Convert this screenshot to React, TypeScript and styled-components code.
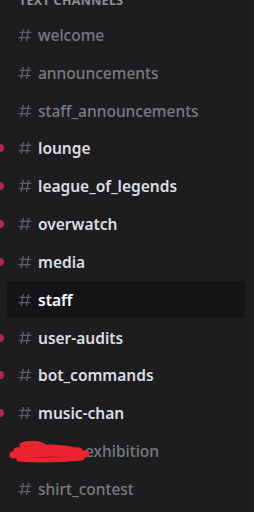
import React from "react";
import styled, { createGlobalStyle } from "styled-components";

const GlobalStyle = createGlobalStyle`
  html, body {
    margin: 0;
    padding: 0;
    background: #1d1d20;
    overflow: hidden;
  }
  * { box-sizing: border-box; }
`;

const Sidebar = styled.nav`
  width: 254px;
  height: 512px;
  background: #1d1d20;
  font-family: "Noto Sans", "Open Sans", sans-serif;
  overflow: hidden;
  display: flex;
  flex-direction: column;
`;

const Header = styled.div`
  margin-top: -7px;
  height: 16px;
  padding-left: 19px;
  margin-bottom: 7px;
  font-size: 12.5px;
  line-height: 16px;
  font-weight: 700;
  letter-spacing: 0.3px;
  text-transform: uppercase;
  color: #8e9096;
`;

const List = styled.ul`
  list-style: none;
  margin: 0;
  padding: 0;
  display: flex;
  flex-direction: column;
`;

const Item = styled.li`
  position: relative;
  height: 37.83px;
  padding: 0.5px 9px 0.5px 7px;
`;

const Pill = styled.span`
  position: absolute;
  left: -4px;
  top: 50%;
  width: 8px;
  height: 8px;
  margin-top: -4px;
  border-radius: 0 4px 4px 0;
  background: #b42650;
`;

type Tone = "muted" | "unread" | "selected";

const Row = styled.div<{ $tone: Tone }>`
  position: relative;
  height: 100%;
  display: flex;
  align-items: center;
  gap: 5px;
  padding-left: 10px;
  border-radius: 4px;
  background: ${(p) => (p.$tone === "selected" ? "#141416" : "transparent")};
`;

const HashIcon = styled.svg`
  flex: none;
  width: 16px;
  height: 16px;
  color: #5d5f64;
`;

const Name = styled.span<{ $tone: Tone }>`
  font-size: 15.5px;
  line-height: 20px;
  white-space: nowrap;
  font-weight: ${(p) => (p.$tone === "muted" ? 500 : 600)};
  color: ${(p) =>
    p.$tone === "selected" ? "#ffffff" : p.$tone === "unread" ? "#dcdde0" : "#797b80"};
`;

const Hidden = styled.span`
  display: inline-block;
  width: 47px;
`;

const Scribble = styled.svg`
  position: absolute;
  left: 2px;
  top: 8px;
  width: 80px;
  height: 22px;
  pointer-events: none;
`;

const Hash = () => (
  <HashIcon viewBox="0 0 24 24" aria-hidden>
    <path
      fill="currentColor"
      fillRule="evenodd"
      d="M5.88657 21C5.57547 21 5.3399 20.7189 5.39427 20.4126L6.00001 17H2.59511C2.28449 17 2.04905 16.7198 2.10259 16.4138L2.27759 15.4138C2.31946 15.1746 2.52722 15 2.77011 15H6.35001L7.41001 9H4.00511C3.69449 9 3.45905 8.71977 3.51259 8.41381L3.68759 7.41381C3.72946 7.17456 3.93722 7 4.18011 7H7.76001L8.39677 3.41262C8.43914 3.17391 8.64664 3 8.88907 3H9.87344C10.1845 3 10.4201 3.28107 10.3657 3.58738L9.76001 7H15.76L16.3968 3.41262C16.4391 3.17391 16.6466 3 16.8891 3H17.8734C18.1845 3 18.4201 3.28107 18.3657 3.58738L17.76 7H21.1649C21.4755 7 21.711 7.28023 21.6574 7.58619L21.4824 8.58619C21.4406 8.82544 21.2328 9 20.9899 9H17.41L16.35 15H19.7549C20.0655 15 20.301 15.2802 20.2474 15.5862L20.0724 16.5862C20.0306 16.8254 19.8228 17 19.5799 17H16L15.3632 20.5874C15.3209 20.8261 15.1134 21 14.8709 21H13.8866C13.5755 21 13.3399 20.7189 13.3943 20.4126L14 17H8.00001L7.36325 20.5874C7.32088 20.8261 7.11337 21 6.87094 21H5.88657ZM9.41045 9L8.35045 15H14.3504L15.4104 9H9.41045Z"
    />
  </HashIcon>
);

const channels: { name: string; tone: Tone; pill?: boolean; redacted?: boolean }[] = [
  { name: "welcome", tone: "muted" },
  { name: "announcements", tone: "muted" },
  { name: "staff_announcements", tone: "muted" },
  { name: "lounge", tone: "unread", pill: true },
  { name: "league_of_legends", tone: "unread", pill: true },
  { name: "overwatch", tone: "unread", pill: true },
  { name: "media", tone: "unread", pill: true },
  { name: "staff", tone: "selected" },
  { name: "user-audits", tone: "unread", pill: true },
  { name: "bot_commands", tone: "unread", pill: true },
  { name: "music-chan", tone: "unread", pill: true },
  { name: "exhibition", tone: "muted", redacted: true },
  { name: "shirt_contest", tone: "muted" },
];

export default function App() {
  return (
    <>
      <GlobalStyle />
      <Sidebar>
        <Header>Text Channels</Header>
        <List>
          {channels.map((c) => (
            <Item key={c.name}>
              {c.pill && <Pill />}
              <Row $tone={c.tone}>
                <Hash />
                <Name $tone={c.tone}>
                  {c.redacted && <Hidden />}
                  {c.name}
                </Name>
                {c.redacted && (
                  <Scribble viewBox="0 0 80 22" aria-hidden>
                    <g
                      fill="none"
                      stroke="#ea2530"
                      strokeLinecap="round"
                      strokeLinejoin="round"
                    >
                      <path strokeWidth="5" d="M13 4 C19 1.5 28 1.5 34 4.5" />
                      <path strokeWidth="7" d="M8 10 C22 7 46 8 70 10" />
                      <path strokeWidth="7" d="M4 14 C24 12 52 12 77 13" />
                      <path strokeWidth="5" d="M10 18 C28 19.5 48 19.5 73 17" />
                      <path strokeWidth="4" d="M26 6 C40 5 55 6 64 8" />
                    </g>
                  </Scribble>
                )}
              </Row>
            </Item>
          ))}
        </List>
      </Sidebar>
    </>
  );
}
